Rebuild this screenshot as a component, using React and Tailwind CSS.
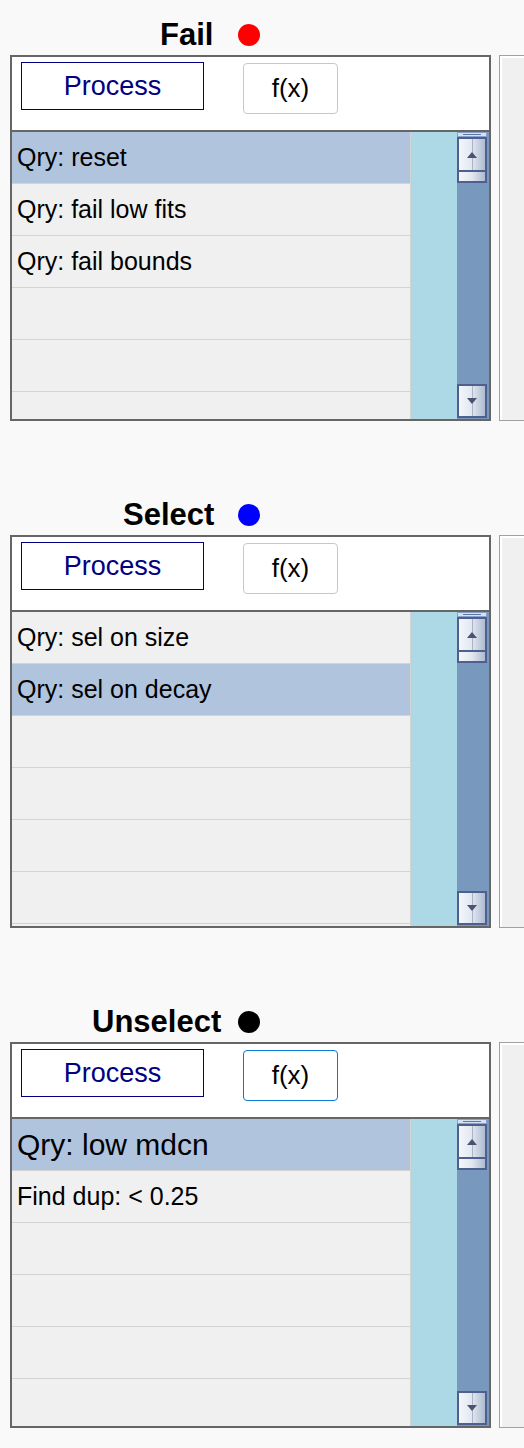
import React from 'react'

const FONT = { fontFamily: '"Liberation Sans", Arial, sans-serif' }

const SECTIONS = [
  {
    title: 'Fail',
    dot: 'bg-[#ff0000]',
    titleClass: 'pl-[160px] gap-[25px]',
    panelH: 'h-[366px]',
    rows: [
      { text: 'Qry: reset', selected: true },
      { text: 'Qry: fail low fits' },
      { text: 'Qry: fail bounds' },
      { text: '' },
      { text: '' },
      { text: '' },
    ],
  },
  {
    title: 'Select',
    dot: 'bg-[#0000ff]',
    titleClass: 'pl-[123px] gap-[24px]',
    panelH: 'h-[393px]',
    rows: [
      { text: 'Qry: sel on size' },
      { text: 'Qry: sel on decay', selected: true },
      { text: '' },
      { text: '' },
      { text: '' },
      { text: '' },
    ],
  },
  {
    title: 'Unselect',
    dot: 'bg-black',
    titleClass: 'pl-[92px] gap-[17px]',
    panelH: 'h-[386px]',
    focused: true,
    rows: [
      { text: 'Qry: low mdcn', selected: true, big: true },
      { text: 'Find dup: < 0.25' },
      { text: '' },
      { text: '' },
      { text: '' },
      { text: '' },
    ],
  },
]

function Arrow({ down }) {
  return (
    <svg width="12" height="8" viewBox="0 0 12 8" className="block">
      {down ? (
        <polygon points="1,1 11,1 6,7" fill="#4a5470" />
      ) : (
        <polygon points="1,7 11,7 6,1" fill="#4a5470" />
      )}
    </svg>
  )
}

function ScrollButton({ down, className = '' }) {
  return (
    <div
      className={`relative flex items-center justify-center border-2 border-[#4e6090] bg-gradient-to-r from-[#f4f6fa] via-[#e2e7f0] to-[#aebbd0] ${className}`}
    >
      <div className="absolute left-1/2 top-0 bottom-0 w-px bg-[#a8b4c8]" />
      <div className="relative">
        <Arrow down={down} />
      </div>
    </div>
  )
}

function Scrollbar() {
  return (
    <div className="flex w-[32px] flex-col bg-[#7898be] pr-[2px]">
      <div className="flex h-[5px] items-center justify-center border border-[#8aa0c8] bg-[#d4e2f6]">
        <div className="h-px w-[18px] bg-[#6078a8]" />
      </div>
      <ScrollButton className="h-[35px]" />
      <div className="h-[11px] border-2 border-t-0 border-[#4e6090] bg-gradient-to-r from-[#f4f6fa] via-[#e2e7f0] to-[#aebbd0]" />
      <div className="flex-1 bg-[#7898be]" />
      <ScrollButton down className="mb-px h-[34px]" />
    </div>
  )
}

function Panel({ section }) {
  return (
    <div className={`flex w-[481px] shrink-0 flex-col border-2 border-[#666666] bg-white ${section.panelH}`}>
      {/* header */}
      <div className="flex h-[75px] shrink-0 items-start border-b-2 border-[#666666] pl-[9px]">
        <button className="mt-[5px] flex h-[48px] w-[183px] items-center justify-center border border-[#000080] bg-white text-[27px] text-[#000080]">
          Process
        </button>
        <button
          className={`ml-[39px] mt-[6px] flex h-[51px] w-[95px] items-center justify-center rounded-[4px] border bg-white text-[26px] text-black ${
            section.focused ? 'border-[#0a78d4]' : 'border-[#c8c8c8]'
          }`}
        >
          f(x)
        </button>
      </div>
      {/* list */}
      <div className="flex min-h-0 flex-1">
        <div className="flex w-[399px] flex-col overflow-hidden border-r border-[#d3d3d3] bg-[#f0f0f0]">
          {section.rows.map((row, i) => (
            <div
              key={i}
              className={`flex h-[52px] shrink-0 items-center border-b border-[#d3d3d3] pl-[5px] text-black ${
                row.selected ? 'bg-[#b0c4de]' : 'bg-[#f0f0f0]'
              } ${row.big ? 'text-[30px]' : 'text-[25px]'}`}
            >
              {row.text}
            </div>
          ))}
        </div>
        <div className="w-[46px] bg-[#add8e6]" />
        <Scrollbar />
      </div>
    </div>
  )
}

function SidePanel({ section }) {
  return (
    <div className={`ml-[8px] w-[80px] shrink-0 border border-[#a0a0a0] bg-white pl-[2px] pt-[2px] ${section.panelH}`}>
      <div className="h-full bg-[#f0f0f0]" />
    </div>
  )
}

export default function App() {
  return (
    <div className="h-[1448px] w-[524px] overflow-hidden bg-[#f9f9f9] pt-[18px]" style={FONT}>
      {SECTIONS.map((section, idx) => (
        <div key={section.title} className={idx > 0 ? 'mt-[77px]' : ''}>
          {/* title */}
          <div className={`flex h-[37px] items-center pb-[4px] ${section.titleClass}`}>
            <span className="text-[31px] font-bold leading-none text-black">{section.title}</span>
            <span className={`h-[22px] w-[22px] rounded-full ${section.dot}`} />
          </div>
          <div className="flex pl-[10px]">
            <Panel section={section} />
            <SidePanel section={section} />
          </div>
        </div>
      ))}
    </div>
  )
}
